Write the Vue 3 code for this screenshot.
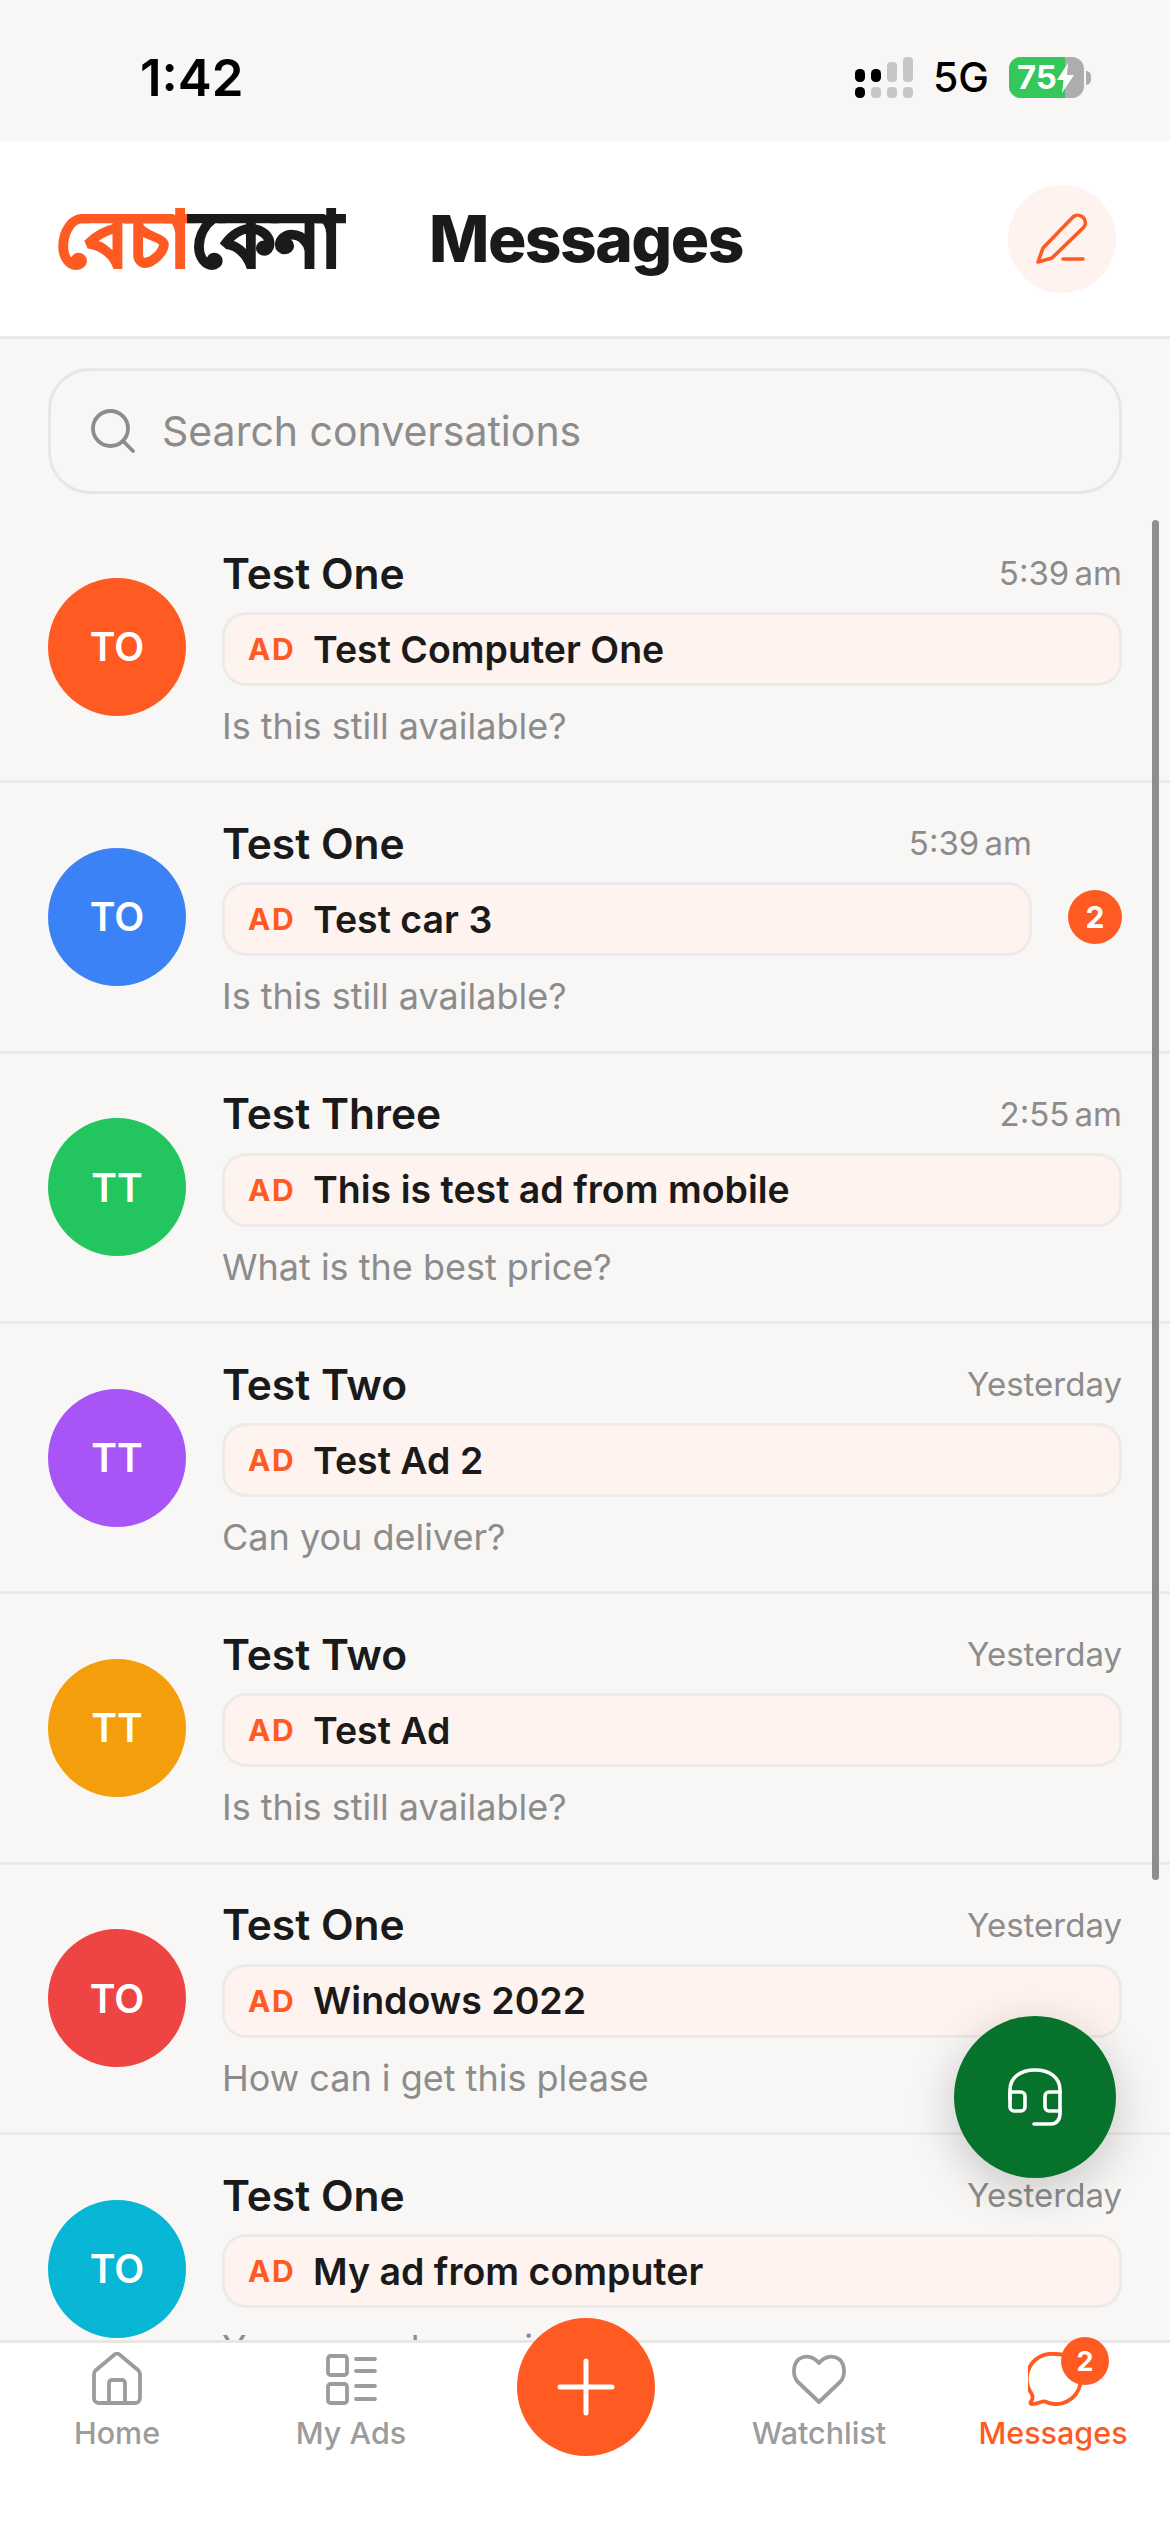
<script setup>
const rows = [
  { name: 'Test One', init: 'TO', color: '#ff5a22', time: '5:39 am', ad: 'Test Computer One', msg: 'Is this still available?' },
  { name: 'Test One', init: 'TO', color: '#3b82f6', time: '5:39 am', ad: 'Test car 3', msg: 'Is this still available?', badge: 2 },
  { name: 'Test Three', init: 'TT', color: '#22c55e', time: '2:55 am', ad: 'This is test ad from mobile', msg: 'What is the best price?' },
  { name: 'Test Two', init: 'TT', color: '#a855f7', time: 'Yesterday', ad: 'Test Ad 2', msg: 'Can you deliver?' },
  { name: 'Test Two', init: 'TT', color: '#f59e0b', time: 'Yesterday', ad: 'Test Ad', msg: 'Is this still available?' },
  { name: 'Test One', init: 'TO', color: '#ef4444', time: 'Yesterday', ad: 'Windows 2022', msg: 'How can i get this please' },
  { name: 'Test One', init: 'TO', color: '#06b6d4', time: 'Yesterday', ad: 'My ad from computer', msg: 'You are welcome in' }
]
</script>

<template>
  <div class="screen">
    <div class="status">
      <span class="clock">1:42</span>
      <div class="status-right">
        <svg class="signal" width="58" height="41" viewBox="0 0 58 41">
          <rect x="0" y="12" width="10" height="13" rx="4.500" fill="#000"/>
          <rect x="16" y="12" width="10" height="13" rx="4.500" fill="#000"/>
          <rect x="32" y="5" width="10" height="20" rx="4" fill="#c6c6c4"/>
          <rect x="48" y="0" width="10" height="25" rx="4" fill="#c6c6c4"/>
          <rect x="0" y="30" width="10" height="11" rx="4.500" fill="#000"/>
          <rect x="16" y="30" width="10" height="11" rx="4" fill="#c6c6c4"/>
          <rect x="32" y="30" width="10" height="11" rx="4" fill="#c6c6c4"/>
          <rect x="48" y="30" width="10" height="11" rx="4" fill="#c6c6c4"/>
        </svg>
        <span class="net">5G</span>
        <div class="battery">
          <div class="batt-body">
            <div class="batt-fill"></div>
            <span class="batt-num">75</span>
            <svg class="bolt" width="17" height="30" viewBox="0 0 17 30"><path d="M11 0 0 17h6.500L5 30 17 12h-7z" fill="#fff"/></svg>
          </div>
          <div class="batt-nub"></div>
        </div>
      </div>
    </div>

    <header class="header">
      <div class="brand"><span class="b1">বেচা</span><span class="b2">কেনা</span></div>
      <h1 class="title">Messages</h1>
      <button class="compose">
        <svg width="54" height="54" viewBox="0 0 54 54" fill="none" stroke="#ff5a22" stroke-width="3.600" stroke-linecap="round" stroke-linejoin="round">
          <path d="M3 50 8 36 38 5a7.500 7.500 0 0 1 11 10L17 46 3 50Z"/>
          <path d="M28 47H48"/>
        </svg>
      </button>
    </header>

    <div class="search-wrap">
      <div class="search">
        <svg width="46" height="46" viewBox="0 0 46 46" fill="none" stroke="#8c8c8c" stroke-width="3.800" stroke-linecap="round">
          <circle cx="20.500" cy="20.500" r="17.500"/>
          <path d="M33.500 33.500 43 43"/>
        </svg>
        <span>Search conversations</span>
      </div>
    </div>

    <div class="list">
      <div v-for="(r, i) in rows" :key="i" class="row">
        <div class="avatar" :style="{ background: r.color }">{{ r.init }}</div>
        <div class="body">
          <div class="top">
            <span class="name">{{ r.name }}</span>
            <span class="time">{{ r.time }}</span>
          </div>
          <div class="pill">
            <span class="ad">AD</span>
            <span class="ad-title">{{ r.ad }}</span>
          </div>
          <div class="msg">{{ r.msg }}</div>
        </div>
        <div v-if="r.badge" class="badge">{{ r.badge }}</div>
      </div>
    </div>

    <div class="scrollbar"></div>

    <button class="support">
      <svg width="56" height="60" viewBox="0 0 56 60" fill="none" stroke="#fff" stroke-width="3.600" stroke-linecap="round" stroke-linejoin="round">
        <path d="M3 32V23C3 10 14 3 28 3s25 7 25 20v24c0 6-4 10-9 10H27"/>
        <path d="M3 25v15a4 4 0 0 0 4 4h7a4 4 0 0 0 4-4V29a4 4 0 0 0-4-4H3Z"/>
        <path d="M53 25H42a4 4 0 0 0-4 4v11a4 4 0 0 0 4 4h11"/>
      </svg>
    </button>

    <nav class="tabs">
      <div class="tab">
        <svg width="50" height="54" viewBox="0 0 50 54" fill="none" stroke="#9c9c9c" stroke-width="3.800" stroke-linecap="round" stroke-linejoin="round">
          <path d="M2 22a5 5 0 0 1 1.500-3.500L22 3a4 4 0 0 1 6 0L46.500 18.500A5 5 0 0 1 48 22V46a5 5 0 0 1-5 5H7a5 5 0 0 1-5-5Z"/>
          <path d="M17 51V31a3 3 0 0 1 3-3h10a3 3 0 0 1 3 3v20"/>
        </svg>
        <span class="tab-label">Home</span>
      </div>
      <div class="tab">
        <svg width="52" height="54" viewBox="0 0 52 54" fill="none" stroke="#9c9c9c" stroke-width="3.800" stroke-linecap="round" stroke-linejoin="round">
          <rect x="3" y="4" width="19" height="19" rx="2.500"/>
          <rect x="3" y="32" width="19" height="19" rx="2.500"/>
          <path d="M31 7h19M31 19h19M31 34h19M31 47h19"/>
        </svg>
        <span class="tab-label">My Ads</span>
      </div>
      <div class="tab tab-plus">
        <div class="plus">
          <svg width="60" height="60" viewBox="0 0 60 60" fill="none" stroke="#fff" stroke-width="5" stroke-linecap="round">
            <path d="M30 4v52M4 30h52"/>
          </svg>
        </div>
      </div>
      <div class="tab">
        <svg width="56" height="54" viewBox="0 0 56 54" fill="none" stroke="#9c9c9c" stroke-width="3.800" stroke-linecap="round" stroke-linejoin="round">
          <path d="M28 50 7 30C1 24 2 12 8 7c6-4 14-3 20 4 6-7 14-8 20-4 6 5 7 17 1 23L28 50Z"/>
        </svg>
        <span class="tab-label">Watchlist</span>
      </div>
      <div class="tab active">
        <div class="msg-icon">
          <svg width="56" height="54" viewBox="0 0 56 54" fill="none" stroke="#ff5a22" stroke-width="3.800" stroke-linecap="round" stroke-linejoin="round">
            <path d="M27 2a25 25 0 1 1-10 47.500c-3-1-6 2.500-13 2.500-1.500 0-2-1-1-2.500 2-2.500 2-5.500 .5-8A25 25 0 0 1 27 2Z"/>
          </svg>
          <span class="tab-badge">2</span>
        </div>
        <span class="tab-label">Messages</span>
      </div>
    </nav>
  </div>
</template>

<style scoped>
.screen {
  position: relative;
  width: 1170px;
  height: 2532px;
  overflow: hidden;
  display: flex;
  flex-direction: column;
  background: #f8f7f5;
  font-family: Inter, "Noto Sans", sans-serif;
  color: #1a1a1a;
}
.status {
  height: 141px;
  flex: none;
  display: flex;
  justify-content: space-between;
  align-items: flex-start;
  padding: 0 79px 0 140px;
}
.clock {
  margin-top: 50px;
  font-size: 51px;
  line-height: 56px;
  font-weight: 600;
  color: #000;
}
.status-right {
  margin-top: 57px;
  display: flex;
  align-items: center;
  gap: 20px;
}
.net {
  font-size: 41px;
  line-height: 41px;
  font-weight: 500;
  color: #000;
}
.battery {
  display: flex;
  align-items: center;
  gap: 2px;
}
.batt-body {
  position: relative;
  width: 75px;
  height: 41px;
  border-radius: 12px;
  overflow: hidden;
  background: #adadad;
  display: flex;
  align-items: center;
}
.batt-fill {
  position: absolute;
  inset: 0 19px 0 0;
  background: #34c759;
}
.batt-num {
  position: relative;
  margin-left: 8px;
  color: #fff;
  font-size: 33px;
  font-weight: 700;
  line-height: 41px;
}
.bolt {
  position: relative;
}
.batt-nub {
  width: 5px;
  height: 14px;
  background: #adadad;
  border-radius: 0 6px 6px 0;
}
.header {
  height: 198px;
  flex: none;
  box-sizing: border-box;
  background: #fff;
  border-bottom: 3px solid #e9e7e5;
  display: flex;
  align-items: center;
  padding: 0 54px 0 55px;
}
.brand {
  width: 291px;
  white-space: nowrap;
  font-size: 75.500px;
  line-height: 100px;
  font-weight: 800;
  -webkit-text-stroke-width: 3.500px;
}
.b1 { color: #ff5a22; -webkit-text-stroke-color: #ff5a22; }
.b2 { color: #1a1a1a; -webkit-text-stroke-color: #1a1a1a; }
.title {
  margin: 0 0 0 83px;
  font-size: 64px;
  font-weight: 800;
  letter-spacing: -1.500px;
  color: #1a1a1a;
}
.compose {
  margin-left: auto;
  width: 108px;
  height: 108px;
  padding: 0;
  border: none;
  border-radius: 50%;
  background: #fef3ef;
  display: flex;
  align-items: center;
  justify-content: center;
}
.search-wrap {
  flex: none;
  padding: 29px 48px 19px;
}
.search {
  height: 126px;
  box-sizing: border-box;
  border: 3px solid #e9e7e5;
  border-radius: 42px;
  display: flex;
  align-items: center;
  padding: 0 0 0 39px;
  gap: 26px;
  font-size: 41px;
  color: #8c8c8c;
}
.list {
  flex: 1;
  min-height: 0;
  overflow: hidden;
}
.row {
  height: 270.330px;
  box-sizing: border-box;
  border-bottom: 3px solid #ecebe9;
  padding: 0 48px;
  display: flex;
  align-items: center;
  gap: 36px;
}
.avatar {
  flex: none;
  width: 138px;
  height: 138px;
  border-radius: 50%;
  color: #fff;
  font-size: 39px;
  font-weight: 600;
  display: flex;
  align-items: center;
  justify-content: center;
}
.body {
  flex: 1;
  min-width: 0;
  margin-top: 3px;
  display: flex;
  flex-direction: column;
  gap: 18px;
}
.top {
  display: flex;
  justify-content: space-between;
  align-items: center;
  height: 42px;
}
.name {
  font-size: 42.500px;
  font-weight: 600;
}
.time {
  font-size: 33px;
  word-spacing: -4px;
  color: #8c8c8c;
}
.pill {
  height: 74px;
  box-sizing: border-box;
  border: 3px solid #ecebe9;
  border-radius: 24px;
  background: #fef3ef;
  display: flex;
  align-items: center;
  padding: 0 0 0 23px;
  gap: 18px;
}
.ad {
  font-size: 30px;
  font-weight: 700;
  letter-spacing: 1.500px;
  color: #ff5a22;
}
.ad-title {
  font-size: 37.500px;
  font-weight: 600;
}
.msg {
  height: 40px;
  margin: 2px 0 -2px;
  line-height: 40px;
  font-size: 36px;
  color: #8c8c8c;
}
.badge {
  flex: none;
  width: 54px;
  height: 54px;
  border-radius: 50%;
  background: #ff5a22;
  color: #fff;
  font-size: 30px;
  font-weight: 700;
  display: flex;
  align-items: center;
  justify-content: center;
}
.scrollbar {
  position: absolute;
  left: 1152px;
  top: 520px;
  width: 7px;
  height: 1360px;
  border-radius: 4px;
  background: #8e8e8e;
}
.support {
  position: absolute;
  left: 954px;
  top: 2016px;
  width: 162px;
  height: 162px;
  padding: 0;
  border: none;
  border-radius: 50%;
  background: #07722b;
  box-shadow: 0 12px 48px rgba(0, 0, 0, 0.2);
  display: flex;
  align-items: center;
  justify-content: center;
}
.tabs {
  position: relative;
  flex: none;
  height: 192px;
  box-sizing: border-box;
  background: #fff;
  border-top: 3px solid #e9e7e5;
  display: grid;
  grid-template-columns: repeat(5, 234px);
}
.tab {
  display: flex;
  flex-direction: column;
  align-items: center;
  padding-top: 9px;
  gap: 9px;
}
.tab-label {
  font-size: 30.500px;
  line-height: 36px;
  font-weight: 500;
  color: #9c9c9c;
}
.active .tab-label { color: #ff5a22; }
.plus {
  position: absolute;
  top: -25px;
  left: 517px;
  width: 138px;
  height: 138px;
  border-radius: 50%;
  background: #ff5a22;
  display: flex;
  align-items: center;
  justify-content: center;
}
.msg-icon {
  position: relative;
  height: 54px;
  margin-left: 6px;
}
.tab-badge {
  position: absolute;
  left: 33px;
  top: -15px;
  width: 48px;
  height: 48px;
  border-radius: 50%;
  background: #ff5a22;
  color: #fff;
  font-size: 27px;
  font-weight: 700;
  display: flex;
  align-items: center;
  justify-content: center;
}
</style>
